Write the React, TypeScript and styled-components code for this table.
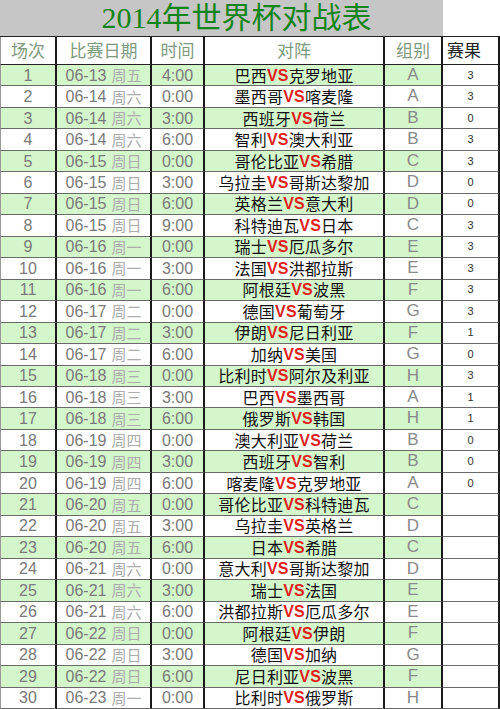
import styled, { createGlobalStyle } from "styled-components";

const GlobalStyle = createGlobalStyle`
  html, body {
    margin: 0;
    padding: 0;
    background: #fff;
  }
`;

const COLS = "57px 95px 53px 180px 58px 57px";

const Sheet = styled.div`
  width: 500px;
  height: 709px;
  display: grid;
  grid-template-rows: 37px 28px repeat(30, minmax(0, 1fr));
  overflow: hidden;
  line-height: 1.2;
  font-family: "Liberation Sans", "Noto Sans CJK SC", sans-serif;
`;

const Row = styled.div`
  display: grid;
  grid-template-columns: ${COLS};
  min-height: 0;
`;

const TitleRow = styled.div`
  display: grid;
  grid-template-columns: 443px 57px;
`;

const Title = styled.div`
  background: #c6c6c6;
  border-bottom: 1px solid #222;
  display: flex;
  align-items: center;
  justify-content: center;
  padding-left: 30px;
  color: #13851a;
  font-family: "Liberation Serif", "Noto Sans CJK SC", serif;
  font-size: 30px;
  line-height: 1.2;
`;

const TitleBlank = styled.div`
  border-bottom: 1px solid #222;
  background: #fff;
`;

const Cell = styled.div<{ $green?: boolean }>`
  display: flex;
  align-items: center;
  justify-content: center;
  white-space: nowrap;
  overflow: hidden;
  min-height: 0;
  background: ${(p) => (p.$green ? "#d3f6cb" : "#fff")};
  border-right: 2px solid #1a1a1a;
  border-bottom: 1px solid #6a6a6a;
  box-sizing: border-box;
  font-size: 16px;
  color: #7a7a7a;
  &:first-child {
    border-left: 1px solid #9a9a9a;
  }
`;

const HeadCell = styled(Cell)<{ $dark?: boolean }>`
  border-bottom: 1px solid #222;
  font-family: "Noto Sans CJK SC", sans-serif;
  font-size: 17px;
  color: ${(p) => (p.$dark ? "#222" : "#7f9a7f")};
  justify-content: ${(p) => (p.$dark ? "flex-start" : "center")};
  padding-left: ${(p) => (p.$dark ? "4px" : "0")};
`;

const Weekday = styled.span`
  margin-left: 5px;
  color: #acacac;
  font-family: "Noto Sans CJK SC", sans-serif;
  font-size: 15px;
`;

const Match = styled(Cell)`
  color: #111;
  font-family: "Noto Sans CJK SC", sans-serif;
  font-size: 16px;
  letter-spacing: 0.2px;
`;

const Vs = styled.b`
  color: #e01f1f;
  font-family: "Liberation Sans", sans-serif;
  font-weight: 700;
  font-size: 16px;
`;

const Group = styled(Cell)`
  color: #8a8a8a;
  font-size: 17px;
`;

const Result = styled(Cell)`
  background: #fff;
  color: #333;
  font-size: 11px;
`;

type Game = [string, string, string, string, string, string, string];

const games: Game[] = [
  ["06-13", "周五", "4:00", "巴西", "克罗地亚", "A", "3"],
  ["06-14", "周六", "0:00", "墨西哥", "喀麦隆", "A", "3"],
  ["06-14", "周六", "3:00", "西班牙", "荷兰", "B", "0"],
  ["06-14", "周六", "6:00", "智利", "澳大利亚", "B", "3"],
  ["06-15", "周日", "0:00", "哥伦比亚", "希腊", "C", "3"],
  ["06-15", "周日", "3:00", "乌拉圭", "哥斯达黎加", "D", "0"],
  ["06-15", "周日", "6:00", "英格兰", "意大利", "D", "0"],
  ["06-15", "周日", "9:00", "科特迪瓦", "日本", "C", "3"],
  ["06-16", "周一", "0:00", "瑞士", "厄瓜多尔", "E", "3"],
  ["06-16", "周一", "3:00", "法国", "洪都拉斯", "E", "3"],
  ["06-16", "周一", "6:00", "阿根廷", "波黑", "F", "3"],
  ["06-17", "周二", "0:00", "德国", "葡萄牙", "G", "3"],
  ["06-17", "周二", "3:00", "伊朗", "尼日利亚", "F", "1"],
  ["06-17", "周二", "6:00", "加纳", "美国", "G", "0"],
  ["06-18", "周三", "0:00", "比利时", "阿尔及利亚", "H", "3"],
  ["06-18", "周三", "3:00", "巴西", "墨西哥", "A", "1"],
  ["06-18", "周三", "6:00", "俄罗斯", "韩国", "H", "1"],
  ["06-19", "周四", "0:00", "澳大利亚", "荷兰", "B", "0"],
  ["06-19", "周四", "3:00", "西班牙", "智利", "B", "0"],
  ["06-19", "周四", "6:00", "喀麦隆", "克罗地亚", "A", "0"],
  ["06-20", "周五", "0:00", "哥伦比亚", "科特迪瓦", "C", ""],
  ["06-20", "周五", "3:00", "乌拉圭", "英格兰", "D", ""],
  ["06-20", "周五", "6:00", "日本", "希腊", "C", ""],
  ["06-21", "周六", "0:00", "意大利", "哥斯达黎加", "D", ""],
  ["06-21", "周六", "3:00", "瑞士", "法国", "E", ""],
  ["06-21", "周六", "6:00", "洪都拉斯", "厄瓜多尔", "E", ""],
  ["06-22", "周日", "0:00", "阿根廷", "伊朗", "F", ""],
  ["06-22", "周日", "3:00", "德国", "加纳", "G", ""],
  ["06-22", "周日", "6:00", "尼日利亚", "波黑", "F", ""],
  ["06-23", "周一", "0:00", "比利时", "俄罗斯", "H", ""],
];

export default function App() {
  return (
    <>
      <GlobalStyle />
      <Sheet>
        <TitleRow>
          <Title>2014年世界杯对战表</Title>
          <TitleBlank />
        </TitleRow>
        <Row>
          <HeadCell>场次</HeadCell>
          <HeadCell>比赛日期</HeadCell>
          <HeadCell>时间</HeadCell>
          <HeadCell>对阵</HeadCell>
          <HeadCell>组别</HeadCell>
          <HeadCell $dark>赛果</HeadCell>
        </Row>
        {games.map(([date, day, time, home, away, group, result], i) => {
          const green = i % 2 === 0;
          return (
            <Row key={i}>
              <Cell $green={green}>{i + 1}</Cell>
              <Cell $green={green}>
                {date}
                <Weekday>{day}</Weekday>
              </Cell>
              <Cell $green={green}>{time}</Cell>
              <Match $green={green}>
                {home}
                <Vs>VS</Vs>
                {away}
              </Match>
              <Group $green={green}>{group}</Group>
              <Result>{result}</Result>
            </Row>
          );
        })}
      </Sheet>
    </>
  );
}
